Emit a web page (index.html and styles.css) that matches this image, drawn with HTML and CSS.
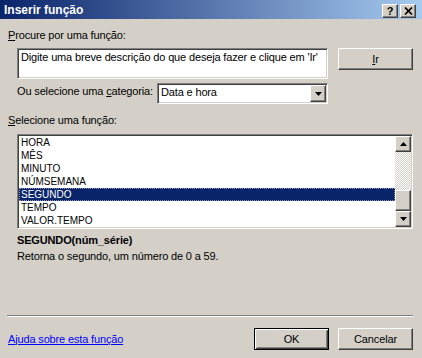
FILE: index.html
```html
<!DOCTYPE html>
<html lang="pt">
<head>
    <meta charset="UTF-8">
    <title>Inserir função</title>
    <link rel="stylesheet" href="styles.css">
</head>
<body>
    <div class="dialog">
        <!-- barra de título -->
        <div class="titlebar">
            <span class="title">Inserir função</span>
            <div class="caption-buttons">
                <span class="cap-btn help">?</span>
                <span class="cap-btn close">
                    <svg width="9" height="8" viewBox="0 0 9 8">
                        <path d="M1 0.5 L8 7.5 M8 0.5 L1 7.5" stroke="#000" stroke-width="1.7"/>
                    </svg>
                </span>
            </div>
        </div>

        <div class="content">
            <div class="label first"><span class="key">P</span>rocure por uma função:</div>
            <div class="search-row">
                <div class="field search">Digite uma breve descrição do que deseja fazer e clique em 'Ir'</div>
                <button class="btn"><span class="key">I</span>r</button>
            </div>

            <div class="category-row">
                <span class="category-label">Ou selecione uma <span class="key">c</span>ategoria:</span>
                <div class="field select">
                    <span class="select-text">Data e hora</span>
                    <span class="raised drop">
                        <svg width="7" height="4" viewBox="0 0 7 4"><polygon points="0,0 7,0 3.5,4" fill="#000"/></svg>
                    </span>
                </div>
            </div>

            <div class="label second"><span class="key">S</span>elecione uma função:</div>
            <div class="field listbox">
                <ul class="items">
                    <li>HORA</li>
                    <li>MÊS</li>
                    <li>MINUTO</li>
                    <li>NÚMSEMANA</li>
                    <li class="selected">SEGUNDO</li>
                    <li>TEMPO</li>
                    <li>VALOR.TEMPO</li>
                </ul>
                <div class="scrollbar">
                    <span class="raised arrow">
                        <svg width="7" height="4" viewBox="0 0 7 4"><polygon points="0,4 7,4 3.5,0" fill="#000"/></svg>
                    </span>
                    <div class="track">
                        <span class="raised thumb"></span>
                    </div>
                    <span class="raised arrow">
                        <svg width="7" height="4" viewBox="0 0 7 4"><polygon points="0,0 7,0 3.5,4" fill="#000"/></svg>
                    </span>
                </div>
            </div>

            <div class="signature">SEGUNDO(núm_série)</div>
            <div class="description">Retorna o segundo, um número de 0 a 59.</div>
        </div>

        <div class="separator"></div>

        <div class="footer">
            <a class="help-link" href="#">Ajuda sobre esta função</a>
            <button class="btn default">OK</button>
            <button class="btn cancel">Cancelar</button>
        </div>
    </div>
</body>
</html>
```

FILE: styles.css
```css
html, body {
    margin: 0;
    padding: 0;
}

body {
    font-family: "Liberation Sans", Arial, sans-serif;
    font-size: 11px;
    letter-spacing: -0.15px;
    color: #000;
    background-color: #d4d0c8;
}

.dialog {
    width: 422px;
    height: 358px;
    display: flex;
    flex-direction: column;
    background-color: #d4d0c8;
    overflow: hidden;
}

/* barra de título */
.titlebar {
    height: 19px;
    display: flex;
    justify-content: space-between;
    align-items: flex-start;
    padding: 0 6px 0 4px;
    background: linear-gradient(to right, #0a246a, #a6caf0);
    color: #fff;
}

.title {
    font-weight: bold;
    font-size: 12px;
    letter-spacing: 0;
    line-height: 18px;
    padding-top: 1px;
}

.caption-buttons {
    display: flex;
    gap: 2px;
    margin-top: 4px;
}

.cap-btn,
.raised {
    box-sizing: border-box;
    display: flex;
    align-items: center;
    justify-content: center;
    background-color: #d4d0c8;
    border: 1px solid;
    border-color: #fff #404040 #404040 #fff;
    box-shadow: inset -1px -1px #808080, inset 1px 1px #d4d0c8;
}

.cap-btn {
    width: 16px;
    height: 14px;
    color: #000;
    font-weight: bold;
    font-size: 11px;
    line-height: 12px;
}

/* conteúdo */
.content {
    flex: 1;
    padding: 0 9px 0 8px;
}

.label {
    line-height: 13px;
}

.label.first {
    margin-top: 10px;
}

.label.second {
    margin-top: 10px;
}

.key {
    text-decoration: underline;
}

.field {
    box-sizing: border-box;
    background-color: #fff;
    border: 1px solid;
    border-color: #808080 #fff #fff #808080;
    box-shadow: inset 1px 1px #404040, inset -1px -1px #d4d0c8;
}

.search-row {
    display: flex;
    align-items: flex-start;
    gap: 10px;
    margin: 6px 0 0 9px;
}

.search {
    width: 311px;
    height: 31px;
    padding: 2px 3px;
    line-height: 13px;
    white-space: nowrap;
}

.btn {
    box-sizing: border-box;
    width: 75px;
    height: 22px;
    padding: 0;
    font-family: inherit;
    font-size: 11px;
    letter-spacing: inherit;
    color: #000;
    background-color: #d4d0c8;
    border: 1px solid;
    border-color: #fff #404040 #404040 #fff;
    box-shadow: inset -1px -1px #808080, inset 1px 1px #d4d0c8;
    border-radius: 0;
}

.btn.default {
    border-color: #000;
    box-shadow: inset 1px 1px #fff, inset -1px -1px #404040, inset 2px 2px #d4d0c8, inset -2px -2px #808080;
}

.category-row {
    width: 311px;
    display: flex;
    justify-content: space-between;
    align-items: flex-start;
    margin: 4px 0 0 9px;
}

.category-label {
    margin-top: 2px;
    line-height: 13px;
}

.select {
    width: 171px;
    height: 21px;
    padding: 1px;
    display: flex;
    align-items: flex-start;
}

.select-text {
    flex: 1;
    padding-left: 2px;
    line-height: 13px;
    margin-top: 1px;
}

.drop {
    width: 16px;
    height: 17px;
}

/* lista de funções */
.listbox {
    width: 396px;
    height: 95px;
    margin: 7px 0 0 9px;
    padding: 1px;
    display: flex;
}

.items {
    flex: 1;
    margin: 0;
    padding: 0;
    list-style: none;
}

.items li {
    height: 13px;
    line-height: 13px;
    font-size: 10px;
    letter-spacing: 0;
    padding-left: 2px;
}

.items li.selected {
    background-color: #0a246a;
    color: #fff;
    outline: 1px dotted #8a93b0;
    outline-offset: -1px;
}

.scrollbar {
    width: 16px;
    display: flex;
    flex-direction: column;
}

.arrow {
    height: 16px;
    flex-shrink: 0;
}

.track {
    flex: 1;
    display: flex;
    flex-direction: column;
    justify-content: flex-end;
    background: repeating-conic-gradient(#fff 0 25%, #d4d0c8 0 50%) 0 0 / 2px 2px;
}

.thumb {
    height: 21px;
}

.signature {
    margin: 5px 0 0 9px;
    font-weight: bold;
    line-height: 13px;
}

.description {
    margin: 3px 0 0 9px;
    line-height: 13px;
}

.separator {
    margin: 0 9px 0 7px;
    border-top: 1px solid #808080;
    border-bottom: 1px solid #fff;
}

/* rodapé */
.footer {
    display: flex;
    align-items: center;
    padding: 11px 9px 8px 8px;
}

.help-link {
    margin-right: auto;
    color: #0000ff;
    line-height: 13px;
}

.cancel {
    margin-left: 9px;
}
```
